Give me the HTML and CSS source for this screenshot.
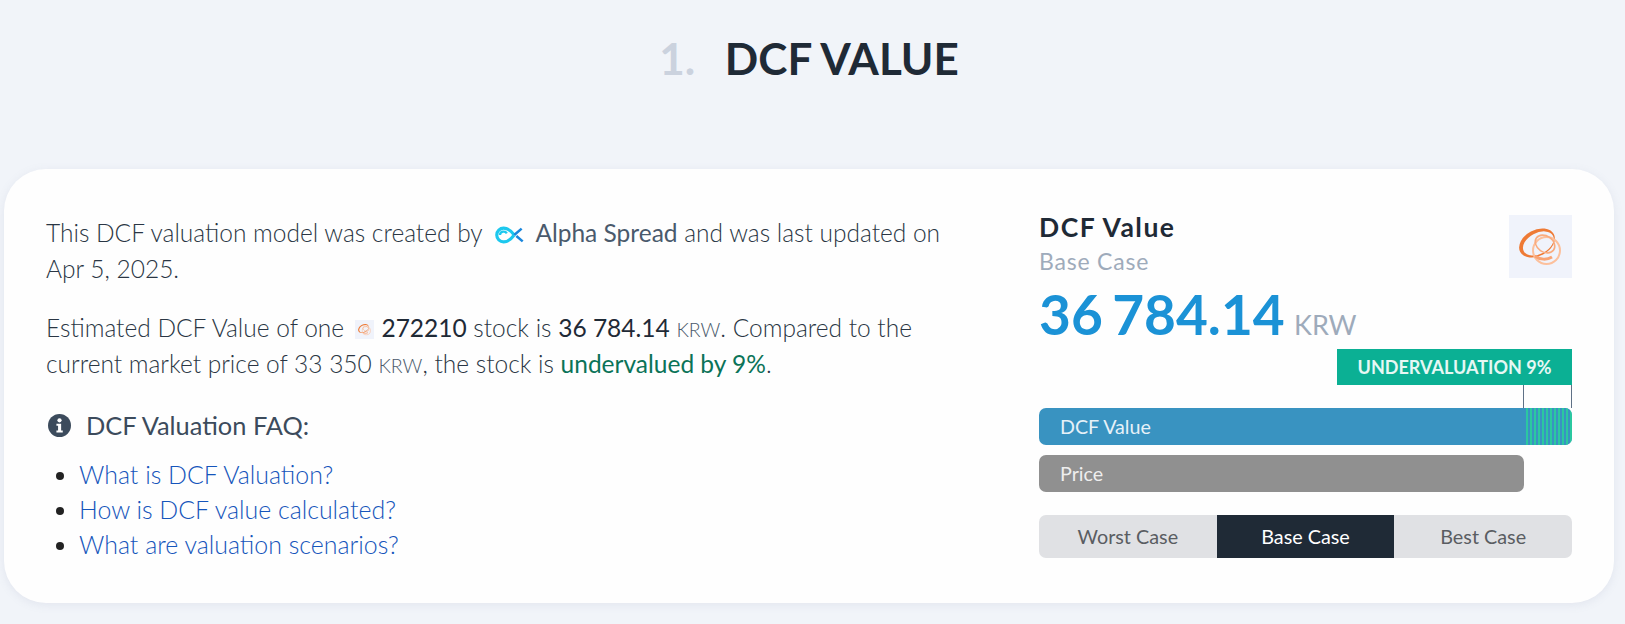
FILE: index.html
```html
<!DOCTYPE html>
<html lang="en">
<head>
  <meta charset="UTF-8" />
  <title>DCF Value</title>
  <link rel="stylesheet" href="styles.css">
</head>
<body>
  <!-- company logo, used twice -->
  <svg class="defs" width="0" height="0">
    <symbol id="co-mark" viewBox="0 0 63 63">
      <rect width="63" height="63" fill="#f0f3fb"/>
      <g transform="rotate(-28 28 28)">
        <path fill-rule="evenodd" fill="#ee7a35" d="M9 28a19 13 0 1 0 38 0a19 13 0 1 0-38 0zM12.500 29a16.500 10.500 0 1 1 33 0a16.500 10.500 0 1 1-33 0z"/>
      </g>
      <circle cx="37.500" cy="35.500" r="13.500" fill="none" stroke="#fcc09c" stroke-width="2"/>
      <ellipse cx="36" cy="29" rx="10.500" ry="8" transform="rotate(35 36 29)" fill="none" stroke="#f9ab7e" stroke-width="1.600"/>
      <path d="M26 41c5 4 12 4 17 1" fill="none" stroke="#f8a374" stroke-width="3"/>
    </symbol>
  </svg>

  <h1 class="title"><span class="title-num">1.</span> DCF VALUE</h1>

  <div class="card">
    <div class="info">
      <p>This DCF valuation model was created by
        <svg class="as-logo" width="32" height="18" viewBox="0 0 30 17">
          <path d="M19 8.500C16 12.500 13 15 9 15A6.500 6.500 0 0 1 9 2C13 2 16 4.500 19 8.500" fill="none" stroke="#1cc8ee" stroke-width="3"/>
          <path d="M5.500 8.500A3.500 3.500 0 0 1 12 7" fill="none" stroke="#1cc8ee" stroke-width="2.200"/>
          <path d="M19 8.500L26 2.500M21 9.500l6 5" fill="none" stroke="#1a86dc" stroke-width="2.400"/>
        </svg>
        <span class="brand">Alpha Spread</span> and was last updated on Apr 5, 2025.</p>
      <p>Estimated DCF Value of one
        <svg class="mini-logo" width="19" height="19"><use href="#co-mark"/></svg>
        <b>272210</b> stock is <b>36 784.14</b> <span class="cur">KRW</span>. Compared to the current market price of 33 350 <span class="cur">KRW</span>, the stock is <span class="under">undervalued by 9%</span>.</p>
      <div class="faq-head">
        <svg class="info-icon" width="23" height="23" viewBox="0 0 24 24">
          <circle cx="12" cy="12" r="12" fill="#3c4b5c"/>
          <circle cx="12" cy="6.600" r="2.200" fill="#fff"/>
          <path d="M8.800 10.200h4.900v7h1.700v2H8.800v-2h1.700v-5H8.800z" fill="#fff"/>
        </svg>
        DCF Valuation FAQ:
      </div>
      <ul class="faq">
        <li><a href="#">What is DCF Valuation?</a></li>
        <li><a href="#">How is DCF value calculated?</a></li>
        <li><a href="#">What are valuation scenarios?</a></li>
      </ul>
    </div>

    <div class="panel">
      <div class="panel-top">
        <div>
          <div class="panel-title">DCF Value</div>
          <div class="panel-sub">Base Case</div>
        </div>
        <svg class="co-logo" width="63" height="63"><use href="#co-mark"/></svg>
      </div>
      <div class="value">36 784.14 <span class="value-cur">KRW</span></div>
      <div class="badge-row"><div class="badge">UNDERVALUATION 9%</div></div>
      <div class="ticks"></div>
      <div class="bar bar-dcf">DCF Value<div class="stripes"></div></div>
      <div class="bar bar-price">Price</div>
      <div class="toggle">
        <div class="toggle-item">Worst Case</div>
        <div class="toggle-item active">Base Case</div>
        <div class="toggle-item">Best Case</div>
      </div>
    </div>
  </div>
</body>
</html>
```

FILE: styles.css
```css
* { box-sizing: border-box; }
body {
  margin: 0;
  height: 624px;
  overflow: hidden;
  background: #f1f4f9;
  font-family: Lato, sans-serif;
  color: #2a3644;
  padding: 0 11px 0 4px;
}
.defs { position: absolute; }
.title {
  margin: 0;
  height: 169px;
  padding-top: 30px;
  text-align: center;
  font-size: 44px;
  line-height: 56px;
  font-weight: 700;
  color: #1f2a36;
}
.title-num { color: #cbd2de; margin-right: 19px; }
.card {
  display: flex;
  justify-content: space-between;
  height: 434px;
  padding: 46px 42px 0;
  background: #fefefe;
  border-radius: 42px;
  box-shadow: 0 2px 10px rgba(120,135,165,0.12);
}
.info { width: 900px; font-size: 24.5px; line-height: 35.5px; font-weight: 300; }
.info p { margin: 0 0 24px; }
.info b { font-weight: 400; color: #1f2a36; }
.as-logo { vertical-align: -2px; margin: 0 3px 0 5px; }
.brand { font-weight: 400; color: #4a5a6c; }
.mini-logo { vertical-align: -2px; margin: 0 1px 0 4px; }
.cur { font-size: 19.5px; line-height: 1; color: #4a5a6c; }
.under { font-weight: 400; color: #0b7358; }
.faq-head { display: flex; align-items: center; gap: 15px; font-size: 25.4px; font-weight: 400; color: #3c4b5c; margin-top: 27px; }
.info-icon { margin-left: 2px; }
.faq { margin: 13px 0 0; padding: 0 0 0 33px; font-size: 24.9px; line-height: 35px; color: #222; }
.faq a { color: #1555bb; text-decoration: none; }
.panel { width: 533px; }
.panel-top { display: flex; justify-content: space-between; }
.panel-title { font-size: 26.5px; line-height: 24px; font-weight: 700; letter-spacing: 1.5px; color: #1f2a36; }
.panel-sub { font-size: 23px; line-height: 30px; margin-top: 7px; letter-spacing: 0.8px; color: #9eabbb; }
.value { font-size: 55px; line-height: 48px; font-weight: 700; word-spacing: -4px; color: #1b92d6; margin-top: 12px; }
.value-cur { font-size: 27px; line-height: 1; font-weight: 400; word-spacing: 0; color: #9eabbb; margin-left: 0; }
.badge-row { display: flex; justify-content: flex-end; margin-top: 11px; }
.badge {
  width: 235px;
  height: 36px;
  background: #0bb094;
  color: #e6f8f4;
  font-size: 18px;
  line-height: 36px;
  font-weight: 700;
  text-align: center;
}
.ticks {
  height: 23px;
  width: 49px;
  margin-left: 484px;
  border-left: 1px solid #5f7186;
  border-right: 1px solid #5f7186;
}
.bar {
  height: 37px;
  border-radius: 7px;
  padding-left: 21px;
  color: #e6f1f8;
  font-size: 19.7px;
  line-height: 37px;
  position: relative;
  overflow: hidden;
}
.bar-dcf { background: #3993c1; }
.stripes {
  position: absolute;
  top: 0;
  bottom: 0;
  right: 0;
  width: 48px;
  background: repeating-linear-gradient(90deg, #3993c1 0, #3993c1 2px, #2bc8a0 2px, #2bc8a0 4px);
}
.bar-price { width: 485px; margin-top: 10px; background: #909090; color: #eee; }
.toggle {
  display: flex;
  height: 43px;
  margin-top: 23px;
  background: #e0e1e4;
  border-radius: 7px;
  overflow: hidden;
}
.toggle-item { flex: 1; text-align: center; font-size: 19.8px; line-height: 42px; color: #5a5d62; }
.toggle-item.active { background: #1f2a36; color: #fff; }
```
